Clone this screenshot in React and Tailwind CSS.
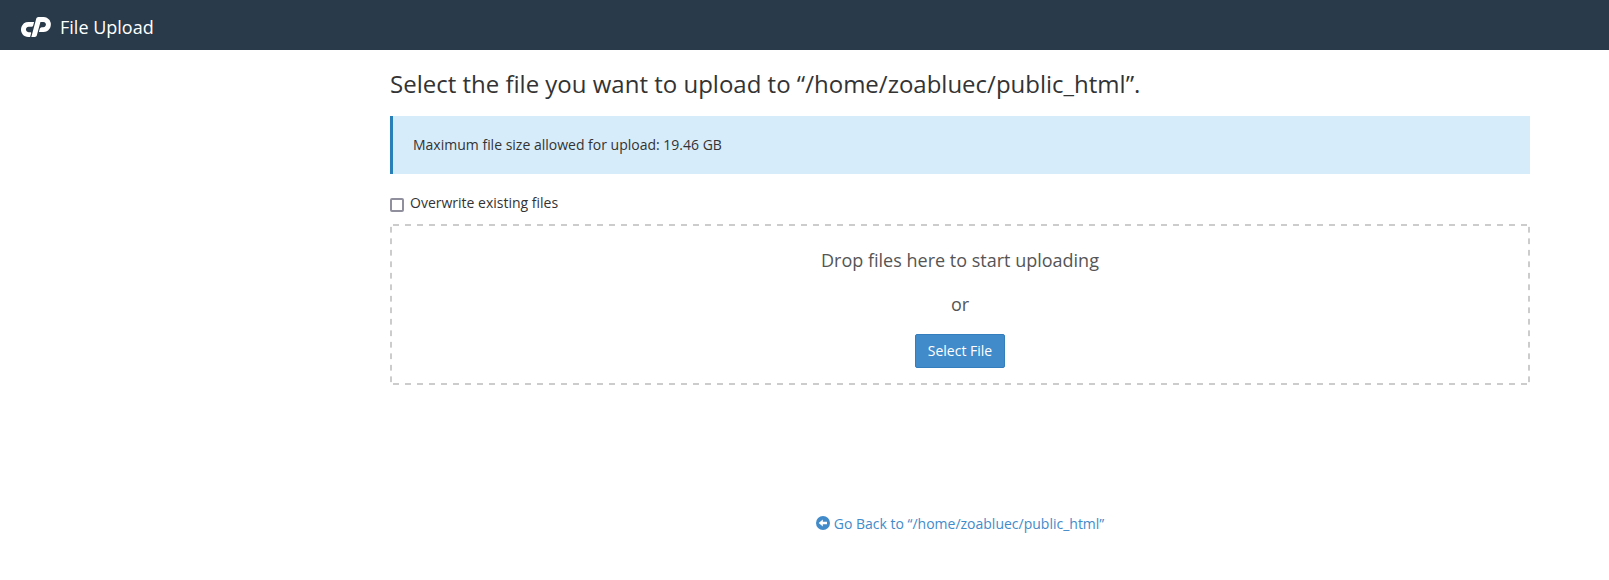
function CpanelLogo() {
  return (
    <svg viewBox="0 0 360 240" className="h-5 w-[30px] shrink-0" fill="currentColor" aria-hidden="true">
      <path d="M89.7 59.1h67.8L147 99.3a25.4 25.4 0 0 1-9 13.5 24.3 24.3 0 0 1-15.3 5.1H91.2a30.5 30.5 0 0 0-19 6.3 33 33 0 0 0-11.6 17.1 31.9 31.9 0 0 0-.4 15.3 33.1 33.1 0 0 0 5.8 12.7 30.3 30.3 0 0 0 10.8 8.9 31.7 31.7 0 0 0 14.4 3.3h19.2a10.8 10.8 0 0 1 8.9 4.3 10.4 10.4 0 0 1 2 9.8l-12 44.4h-21a84.8 84.8 0 0 1-39.8-9.4 89.8 89.8 0 0 1-30-25.1A88.4 88.4 0 0 1 2 169.6a85.3 85.3 0 0 1 1-41.2l1.2-4.5a88.4 88.4 0 0 1 12-26.4A88.2 88.2 0 0 1 60 64a86.2 86.2 0 0 1 29.7-4.9Z" />
      <path d="M123.9 240 183.3 18.600a25.400 25.400 0 0 1 9-13.500A24.300 24.300 0 0 1 207.600 0h62.700a84.800 84.800 0 0 1 39.700 9.400 89.200 89.200 0 0 1 46.400 60.600 83.700 83.700 0 0 1-1.200 41.200l-1.200 4.500a89.900 89.900 0 0 1-12 26.600 87.600 87.600 0 0 1-73.200 39.100h-54.300l10.800-40.500a25.400 25.400 0 0 1 9-13.200 24.300 24.300 0 0 1 15.300-5.100h17.400a31.600 31.600 0 0 0 30.600-23.700 29.400 29.400 0 0 0 .4-14.700 33.100 33.100 0 0 0-5.800-12.700 31.800 31.800 0 0 0-10.800-9 30.600 30.600 0 0 0-14.400-3.500h-33.600l-43.800 162.900a25.400 25.400 0 0 1-9 13.200 23.900 23.900 0 0 1-15.300 4.900Z" />
    </svg>
  );
}

function BackIcon() {
  return (
    <svg viewBox="0 0 14 14" className="mt-0.5 size-3.5 shrink-0" aria-hidden="true">
      <circle cx="7" cy="7" r="7" fill="currentColor" />
      <path d="M2.7 7 6.8 3.5V5.8H11V8.2H6.8V10.5Z" fill="#fff" />
    </svg>
  );
}

export default function App() {
  return (
    <div className="min-h-screen bg-white font-['Open_Sans',sans-serif] text-sm text-[#333]">
      <header className="flex h-[50px] items-center gap-[9px] bg-[#293a4a] px-[21px] pt-1 text-white">
        <CpanelLogo />
        <span className="text-lg">File Upload</span>
      </header>

      <main className="pl-[390px] pr-[79px] pt-5">
        <h1 className="text-2xl leading-7">Select the file you want to upload to “/home/zoabluec/public_html”.</h1>

        <div className="mt-[18px] border-l-3 border-[#2980b9] bg-[#d7ecfa] px-5 py-[19px]">
          Maximum file size allowed for upload: 19.46 GB
        </div>

        <label className="mt-5 flex w-fit items-start gap-1.5">
          <input
            type="checkbox"
            className="mt-1 size-3.5 appearance-none rounded-xs border-2 border-[#8f8f9d] bg-white checked:bg-[#428bca]"
          />
          <span className="leading-[18px]">Overwrite existing files</span>
        </label>

        <section className="mt-3 flex flex-col items-center bg-[linear-gradient(90deg,transparent_25%,#ccc_25%_75%,transparent_75%),linear-gradient(90deg,transparent_25%,#ccc_25%_75%,transparent_75%),linear-gradient(transparent_25%,#ccc_25%_75%,transparent_75%),linear-gradient(transparent_25%,#ccc_25%_75%,transparent_75%)] [background-position:0_0,0_100%,0_0,100%_0] [background-repeat:round_no-repeat,round_no-repeat,no-repeat_round,no-repeat_round] [background-size:12px_2px,12px_2px,2px_calc(100%/14),2px_calc(100%/14)] pt-6 pb-[17px] text-lg leading-6 text-[#555]">
          <p>Drop files here to start uploading</p>
          <p className="mt-5">or</p>
          <button
            type="button"
            className="mt-[18px] rounded-xs border border-[#357ebd] bg-[#428bca] px-3 py-1.5 text-sm text-white"
          >
            Select File
          </button>
        </section>

        <div className="mt-[129px] flex justify-center">
          <a href="#public_html" className="flex items-start gap-1 text-[#428bca]">
            <BackIcon />
            Go Back to “/home/zoabluec/public_html”
          </a>
        </div>
      </main>
    </div>
  );
}
